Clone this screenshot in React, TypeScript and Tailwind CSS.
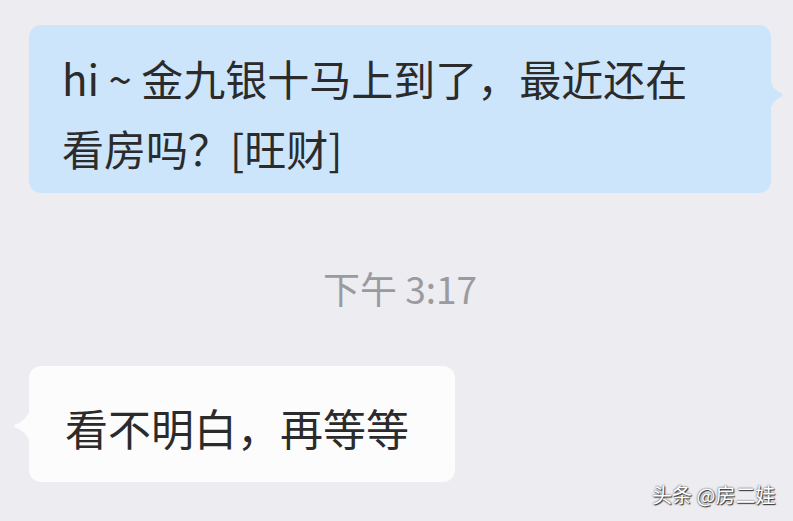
export default function App() {
  const font = { fontFamily: '"Noto Sans CJK SC", "Noto Sans", sans-serif' };

  return (
    <div
      className="w-[793px] h-[521px] bg-[#ececf1] overflow-hidden relative text-[#2b2b2b]"
      style={font}
    >
      <div className="pt-[25px] pl-[29px] flex flex-col">
        {/* outgoing message */}
        <div className="relative w-[742px] bg-[#cce5fb] rounded-[12px] pl-[33px] pr-[70px] pt-[18px] pb-[10px] text-[42px] leading-[70px]">
          hi ~ 金九银十马上到了，最近还在看房吗？[旺财]
          <svg className="absolute right-[-13px] top-[54px]" width="14" height="32" viewBox="0 0 14 32">
            <path d="M0 0 C2 8 6 12 11 14 Q14 16 11 18 C6 20 2 24 0 32 Z" fill="#cce5fb" />
          </svg>
        </div>

        {/* timestamp */}
        <div className="w-[742px] flex justify-center mt-[73px] text-[37px] leading-[44px] text-[#9b9b9f]">
          下午 3:17
        </div>

        {/* incoming message */}
        <div className="mt-[56px] self-start">
          <div className="relative bg-[#fcfcfd] rounded-[12px] pl-[36px] pr-[46px] pt-[26px] pb-[20px] text-[43px] leading-[70px]">
            看不明白，再等等
            <svg className="absolute left-[-17px] top-[44px]" width="18" height="32" viewBox="0 0 18 32">
              <path d="M18 0 C15 8 10 12 4 14 Q0 16 4 18 C10 20 15 24 18 32 Z" fill="#fcfcfd" />
            </svg>
          </div>
        </div>
      </div>

      {/* watermark */}
      <div className="absolute left-[652px] top-[481px] text-[20px] leading-[28px] text-white [text-shadow:0_0_2px_#333,1px_1px_1px_#333]">
        头条 @房二娃
      </div>
    </div>
  );
}
